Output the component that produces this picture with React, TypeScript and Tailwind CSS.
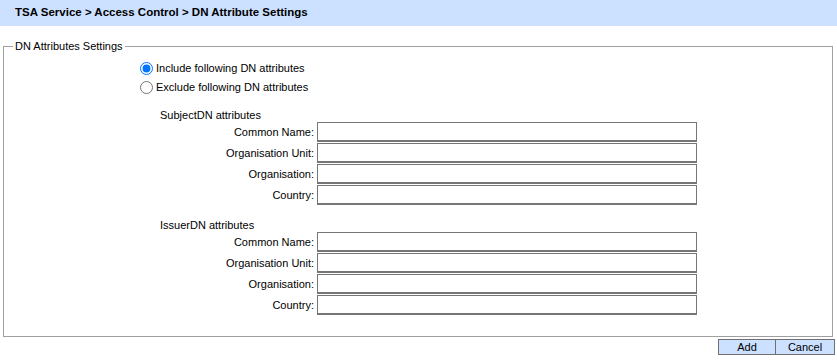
const fields = ["Common Name:", "Organisation Unit:", "Organisation:", "Country:"];

function AttrGroup({ title }: { title: string }) {
  return (
    <div className="flex flex-col">
      <div className="pl-[156px] h-[11px] leading-[9px]">{title}</div>
      <div className="flex flex-col gap-[1px]">
        {fields.map((label) => (
          <div key={label} className="flex items-center">
            <div className="w-[313px] pr-[3px] text-right">{label}</div>
            <input
              type="text"
              className="w-[380px] h-[20px] border border-[#767676] border-b-2 bg-white outline-none px-1"
            />
          </div>
        ))}
      </div>
    </div>
  );
}

export default function App() {
  return (
    <div
      className="w-[837px] h-[361px] bg-white text-[11px] text-[#000] overflow-hidden"
      style={{ fontFamily: "Tahoma, 'Liberation Sans', Arial, sans-serif" }}
    >
      <div className="h-[26px] bg-[#cce0ff] pl-[15px] flex items-center font-bold text-[11.5px]">
        TSA Service &gt; Access Control &gt; DN Attribute Settings
      </div>
      <fieldset className="mt-[13px] ml-[3px] mr-[4px] h-[298px] border border-[#a0a0a0]">
        <legend className="ml-[9px] px-[2px] leading-[15px]">DN Attributes Settings</legend>
        <div className="flex flex-col pl-[136px] pt-[5px] gap-[1px]">
          <label className="flex items-center h-[18px]">
            <input type="radio" name="mode" defaultChecked className="m-0 mr-[3px] w-[13px] h-[13px]" />
            Include following DN attributes
          </label>
          <label className="flex items-center h-[18px]">
            <input type="radio" name="mode" className="m-0 mr-[3px] w-[13px] h-[13px]" />
            Exclude following DN attributes
          </label>
        </div>
        <div className="mt-[15px]">
          <AttrGroup title="SubjectDN attributes" />
        </div>
        <div className="mt-[16px]">
          <AttrGroup title="IssuerDN attributes" />
        </div>
      </fieldset>
      <div className="flex justify-end pr-[2px] mt-[2px]">
        <button className="w-[58px] h-[16px] bg-[#cce0ff] border border-[#707070] text-[11px] leading-[14px]">Add</button>
        <button className="w-[59px] h-[16px] bg-[#cce0ff] border border-[#707070] border-l-0 text-[11px] leading-[14px]">Cancel</button>
      </div>
    </div>
  );
}
